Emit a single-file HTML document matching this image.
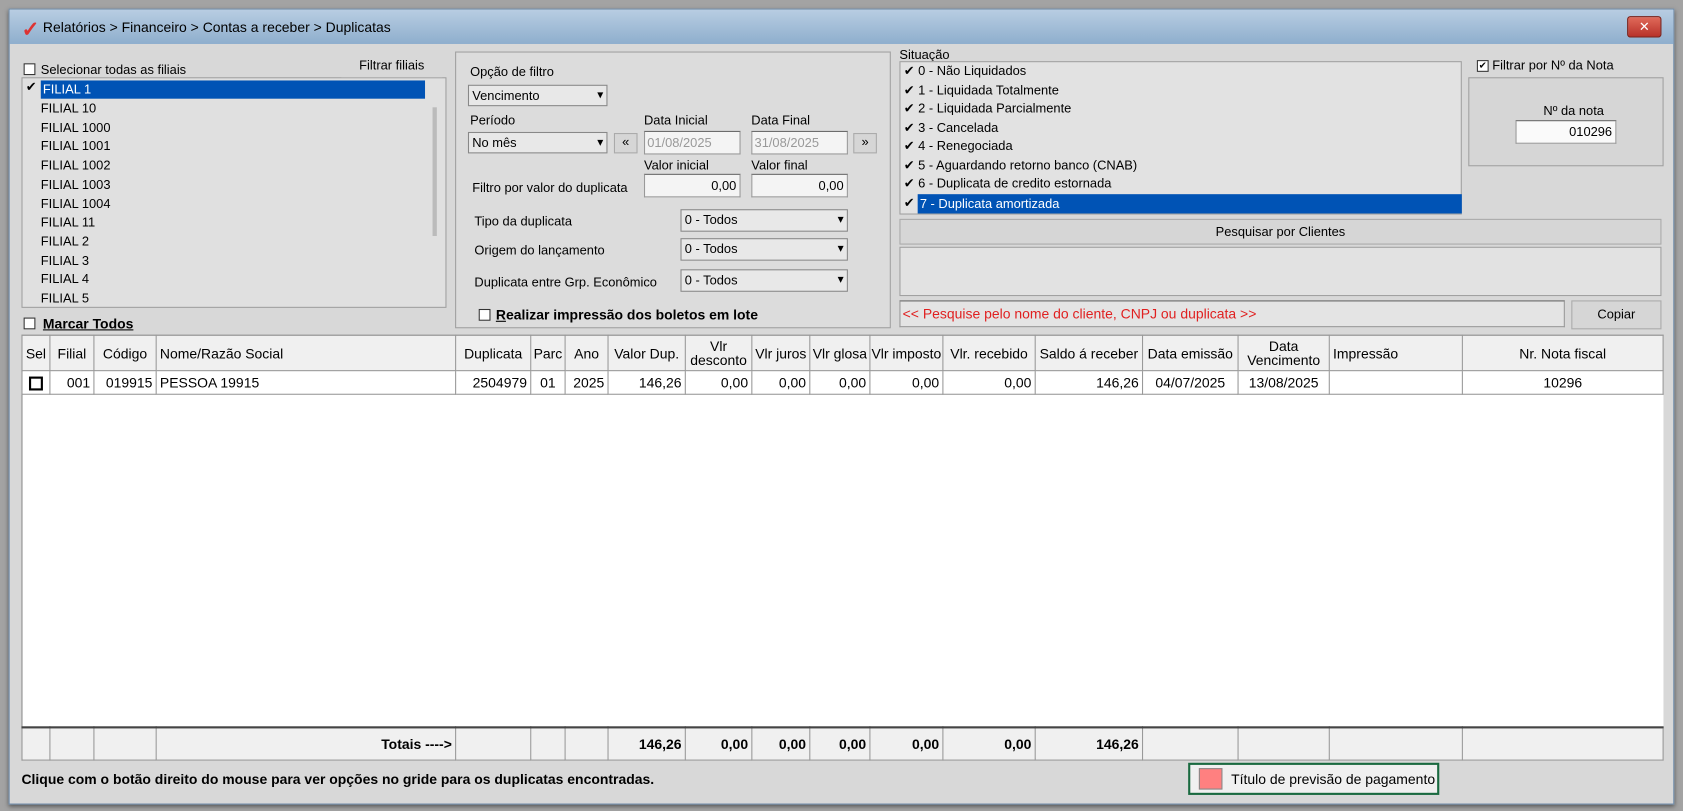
<!DOCTYPE html>
<html><head><meta charset="utf-8"><style>
*{margin:0;padding:0;box-sizing:border-box}
body{width:1683px;height:811px;overflow:hidden;background:#a3a3a3;font-family:"Liberation Sans Narrow","Liberation Sans",sans-serif;font-size:12px;color:#000}
#w{position:absolute;left:0;top:0;width:1568px;height:756px;transform:scale(1.0733,1.0728);transform-origin:0 0}
.a{position:absolute}
.win{left:8px;top:8px;width:1552px;height:742px;background:#d8d8d8;border:1px solid #6d8aa8;box-shadow:0 2px 4px #555}
.title{left:9px;top:9px;width:1550px;height:32px;background:linear-gradient(#b8cde2,#8eaecd);}
.box{border:1px solid #a0a0a0;background:#e2e2e2}
.inp{background:#f4f4f4;border:1px solid #999;border-top-color:#666}
.cb{width:11px;height:11px;border:1px solid #333;background:#fff}
.sel{background:#0053b5;color:#fff}
.combo{background:#e8e8e8;border:1px solid #888;padding-left:3px;line-height:18px}
.combo:after{content:"▾";position:absolute;right:3px;top:0;font-size:11px}
.btn{background:#d6d6d6;border:1px solid #aaa;text-align:center}
table{border-collapse:collapse;position:absolute;left:20px;top:312px;width:1530px}
td{border:1px solid #999;padding:0 3px;font-size:13px;white-space:nowrap}
</style></head><body><div id="w">
<div class="a win"></div>
<div class="a title"></div>
<div class="a" style="left:20px;top:15px;color:#d33;font-size:20px;font-weight:bold">✓</div>
<div class="a" style="left:40px;top:18px;font-size:13px">Relatórios &gt; Financeiro &gt; Contas a receber &gt; Duplicatas</div>
<div class="a" style="left:1516px;top:15px;width:32px;height:20px;background:linear-gradient(#e06a5a,#b8322a);border:1px solid #7a2018;border-radius:3px;color:#fff;text-align:center;font-size:12px;line-height:18px">✕</div>

<div class="a box" style="left:20px;top:72px;width:396px;height:215px;background:#e0e0e0"></div>
<div class="a cb" style="left:22px;top:59px"></div>
<div class="a" style="left:38px;top:58px">Selecionar todas as filiais</div>
<div class="a btn" style="left:318px;top:52px;width:94px;height:20px;line-height:18px;border:none;background:#d8d8d8">Filtrar filiais</div>
<div class="a sel" style="left:38px;top:75px;width:358px;height:17px;line-height:17px;padding-left:2px">FILIAL 1</div>
<div class="a" style="left:24px;top:74px">✔</div>
<div class="a" style="left:38px;top:93px;line-height:17.7px">FILIAL 10<br>FILIAL 1000<br>FILIAL 1001<br>FILIAL 1002<br>FILIAL 1003<br>FILIAL 1004<br>FILIAL 11<br>FILIAL 2<br>FILIAL 3<br>FILIAL 4<br>FILIAL 5</div>
<div class="a" style="left:403px;top:100px;width:4px;height:120px;background:#bbb"></div>
<div class="a cb" style="left:22px;top:296px"></div>
<div class="a" style="left:40px;top:294px;font-weight:bold;text-decoration:underline;font-size:13px">Marcar Todos</div>

<div class="a box" style="left:424px;top:48px;width:406px;height:258px;background:#dcdcdc"></div>
<div class="a" style="left:438px;top:60px">Opção de filtro</div>
<div class="a combo" style="left:436px;top:79px;width:130px;height:20px">Vencimento</div>
<div class="a" style="left:438px;top:105px">Período</div>
<div class="a combo" style="left:436px;top:123px;width:130px;height:20px">No mês</div>
<div class="a btn" style="left:572px;top:124px;width:22px;height:19px">«</div>
<div class="a" style="left:600px;top:105px">Data Inicial</div>
<div class="a inp" style="left:600px;top:122px;width:90px;height:22px;color:#999;padding-left:2px;line-height:20px">01/08/2025</div>
<div class="a" style="left:700px;top:105px">Data Final</div>
<div class="a inp" style="left:700px;top:122px;width:90px;height:22px;color:#999;padding-left:2px;line-height:20px">31/08/2025</div>
<div class="a btn" style="left:795px;top:124px;width:22px;height:19px">»</div>
<div class="a" style="left:600px;top:147px">Valor inicial</div>
<div class="a" style="left:700px;top:147px">Valor final</div>
<div class="a" style="left:440px;top:168px">Filtro por valor do duplicata</div>
<div class="a inp" style="left:600px;top:162px;width:90px;height:22px;text-align:right;padding-right:3px;line-height:20px">0,00</div>
<div class="a inp" style="left:700px;top:162px;width:90px;height:22px;text-align:right;padding-right:3px;line-height:20px">0,00</div>
<div class="a" style="left:442px;top:199px">Tipo da duplicata</div>
<div class="a combo" style="left:634px;top:195px;width:156px;height:21px">0 - Todos</div>
<div class="a" style="left:442px;top:226px">Origem do lançamento</div>
<div class="a combo" style="left:634px;top:222px;width:156px;height:21px">0 - Todos</div>
<div class="a" style="left:442px;top:256px">Duplicata entre Grp. Econômico</div>
<div class="a combo" style="left:634px;top:251px;width:156px;height:21px">0 - Todos</div>
<div class="a cb" style="left:446px;top:288px"></div>
<div class="a" style="left:462px;top:286px;font-weight:bold;font-size:13px"><u>R</u>ealizar impressão dos boletos em lote</div>

<div class="a" style="left:838px;top:44px">Situação</div>
<div class="a box" style="left:838px;top:57px;width:524px;height:143px"></div>
<div class="a" style="left:842px;top:58px;line-height:17.5px">✔ 0 - Não Liquidados<br>✔ 1 - Liquidada Totalmente<br>✔ 2 - Liquidada Parcialmente<br>✔ 3 - Cancelada<br>✔ 4 - Renegociada<br>✔ 5 - Aguardando retorno banco (CNAB)<br>✔ 6 - Duplicata de credito estornada<br>✔</div>
<div class="a sel" style="left:855px;top:181px;width:507px;height:18px;line-height:18px;padding-left:2px">7 - Duplicata amortizada</div>
<div class="a box" style="left:1368px;top:72px;width:182px;height:83px;background:#d6d6d6"></div>
<div class="a" style="left:1376px;top:54px;background:#d8d8d8;padding-right:4px"><span class="cb" style="display:inline-block;vertical-align:middle;text-align:center;font-size:9px;line-height:9px">✔</span> Filtrar por Nº da Nota</div>
<div class="a" style="left:1438px;top:96px">Nº da nota</div>
<div class="a inp" style="left:1412px;top:112px;width:94px;height:22px;text-align:right;padding-right:3px;line-height:20px;background:#fafafa">010296</div>
<div class="a btn" style="left:838px;top:204px;width:710px;height:24px;line-height:22px">Pesquisar por Clientes</div>
<div class="a box" style="left:838px;top:230px;width:710px;height:46px;background:#e2e2e2"></div>
<div class="a inp" style="left:838px;top:280px;width:620px;height:25px;color:#e02020;font-size:13px;line-height:23px;padding-left:2px;background:#e4e4e4">&lt;&lt; Pesquise pelo nome do cliente, CNPJ ou duplicata &gt;&gt;</div>
<div class="a btn" style="left:1464px;top:280px;width:84px;height:27px;line-height:25px">Copiar</div>

<div class="a" style="left:20px;top:312px;width:1530px;height:396px;background:#f0f0f0;border:1px solid #888"></div>
<table>
<tr style="height:33px;background:#f0f0f0;text-align:center;line-height:13px"><td style="width:26px;padding:0">Sel</td><td style="width:41px">Filial</td><td style="width:58px">Código</td><td style="width:279px;text-align:left">Nome/Razão Social</td><td style="width:70px">Duplicata</td><td style="width:32px;padding:0">Parc</td><td style="width:40px">Ano</td><td style="width:72px">Valor Dup.</td><td style="width:62px">Vlr<br>desconto</td><td style="width:54px;padding:0">Vlr juros</td><td style="width:56px;padding:0">Vlr glosa</td><td style="width:68px;padding:0">Vlr imposto</td><td style="width:86px">Vlr. recebido</td><td style="width:100px">Saldo á receber</td><td style="width:89px">Data emissão</td><td style="width:85px">Data<br>Vencimento</td><td style="width:124px;text-align:left">Impressão</td><td>Nr. Nota fiscal</td></tr>
<tr style="height:22px;background:#fff;text-align:right"><td style="text-align:center;padding:0"><span class="cb" style="display:inline-block;width:13px;height:13px;border:2px solid #000;vertical-align:middle"></span></td><td>001</td><td>019915</td><td style="text-align:left">PESSOA 19915</td><td>2504979</td><td style="text-align:center">01</td><td>2025</td><td>146,26</td><td>0,00</td><td>0,00</td><td>0,00</td><td>0,00</td><td>0,00</td><td>146,26</td><td style="text-align:center">04/07/2025</td><td style="text-align:center">13/08/2025</td><td></td><td style="text-align:center">10296</td></tr>
<tr style="height:310px;background:#fff"><td colspan="18" style="border:none;border-top:1px solid #999"></td></tr>
<tr style="height:31px;background:#f0f0f0;text-align:right;font-weight:bold;border-top:2px solid #444"><td></td><td></td><td></td><td>Totais ----&gt;</td><td></td><td></td><td></td><td>146,26</td><td>0,00</td><td>0,00</td><td>0,00</td><td>0,00</td><td>0,00</td><td>146,26</td><td></td><td></td><td></td><td></td></tr>
</table>
<div class="a" style="left:20px;top:719px;font-weight:bold;font-size:13px">Clique com o botão direito do mouse para ver opções no gride para os duplicatas encontradas.</div>
<div class="a" style="left:1107px;top:711px;width:234px;height:30px;border:2px solid #1a6a40;background:#f0f0f0"></div>
<div class="a" style="left:1117px;top:716px;width:22px;height:20px;background:#ff8080;border:1px solid #888"></div>
<div class="a" style="left:1147px;top:719px;font-size:13px">Título de previsão de pagamento</div>
</div></body></html>
